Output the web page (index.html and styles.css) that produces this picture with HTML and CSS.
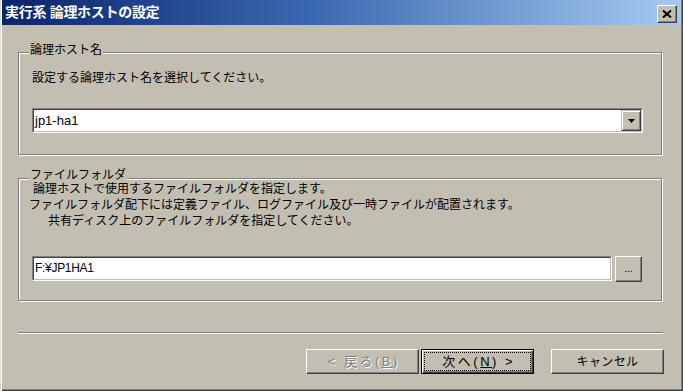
FILE: index.html
```
<!DOCTYPE html>
<html lang="ja">
<head>
<meta charset="utf-8">
<title>実行系 論理ホストの設定</title>
<link rel="stylesheet" href="styles.css">
</head>
<body>
<div class="window">
  <div class="titlebar">
    <span class="title">実行系 論理ホストの設定</span>
    <span class="close-btn">
      <svg width="10" height="8" viewBox="0 0 10 8"><path d="M1 0.5 L9 7.5 M9 0.5 L1 7.5" stroke="#000" stroke-width="2" fill="none"/></svg>
    </span>
  </div>
  <div class="client">
    <div class="group group-host">
      <span class="legend">論理ホスト名</span>
      <div class="desc">設定する論理ホスト名を選択してください。</div>
      <div class="combo">
        <div class="field-inner">
          <span class="value">jp1-ha1</span>
          <span class="drop-btn">
            <svg width="7" height="4" viewBox="0 0 7 4"><path d="M0 0 H7 L3.5 4 Z" fill="#000"/></svg>
          </span>
        </div>
      </div>
    </div>
    <div class="group group-folder">
      <span class="legend">ファイルフォルダ</span>
      <div class="lines">
        <div class="line line-1">論理ホストで使用するファイルフォルダを指定します。</div>
        <div class="line line-2">ファイルフォルダ配下には定義ファイル、ログファイル及び一時ファイルが配置されます。</div>
        <div class="line line-3">共有ディスク上のファイルフォルダを指定してください。</div>
      </div>
      <div class="path-row">
        <div class="edit">
          <div class="field-inner"><span class="value">F:¥JP1HA1</span></div>
        </div>
        <span class="browse-btn">...</span>
      </div>
    </div>
    <div class="separator"></div>
    <div class="buttons">
      <span class="btn btn-disabled"><span class="label wide">&lt; 戻る(<u>B</u>)</span></span>
      <span class="btn btn-default"><span class="focus"><span class="label wide">次へ(<u>N</u>) &gt;</span></span></span>
      <span class="btn btn-cancel"><span class="label">キャンセル</span></span>
    </div>
  </div>
</div>
</body>
</html>
```
FILE: styles.css
```
html, body {
  margin: 0;
  padding: 0;
}
body {
  width: 683px;
  height: 391px;
  overflow: hidden;
  background: #c2beb2;
  font-family: "Liberation Sans", "Noto Sans CJK JP", sans-serif;
  font-size: 12px;
  color: #000;
}
.window {
  box-sizing: border-box;
  width: 683px;
  height: 391px;
  padding: 0 2px 2px 2px;
  background: #c2beb2;
  box-shadow: inset 1px 0 #dcd9d0, inset 2px 0 #fff, inset -1px -1px #404040, inset -2px -2px #808080;
  display: flex;
  flex-direction: column;
}
.titlebar {
  height: 25px;
  flex: none;
  display: flex;
  align-items: flex-start;
  background: linear-gradient(to right, #0a246a 0%, #3a68b0 45%, #a6caf0 100%);
}
.title {
  color: #fff;
  font-weight: bold;
  font-size: 14px;
  line-height: 16px;
  margin: 4px 0 0 3px;
  letter-spacing: -0.3px;
  flex: 1;
  white-space: nowrap;
}
.close-btn {
  box-sizing: border-box;
  width: 20px;
  height: 18px;
  margin: 5px 4px 0 0;
  background: #c2beb2;
  border: 1px solid;
  border-color: #fff #404040 #404040 #fff;
  box-shadow: inset -1px -1px #808080;
  display: flex;
  align-items: center;
  justify-content: center;
}
.close-btn svg {
  display: block;
}
.client {
  flex: 1;
  padding: 27px 19px 0 16px;
  display: flex;
  flex-direction: column;
}
.group {
  position: relative;
  border: 1px solid #808080;
  box-shadow: inset 1px 1px #fff, 1px 1px #fff;
}
.legend {
  position: absolute;
  top: -9px;
  left: 10px;
  padding: 0 1px;
  line-height: 13px;
  height: 13px;
  background: #c2beb2;
  white-space: nowrap;
}
.group-folder .legend {
  top: -10px;
}
.group-host {
  height: 103px;
  box-sizing: border-box;
  padding: 17px 18px 0 13px;
}
.desc {
  line-height: 16px;
  height: 16px;
  white-space: nowrap;
}
.combo, .edit {
  box-sizing: border-box;
  height: 25px;
  border: 1px solid;
  border-color: #808080 #fff #fff #808080;
}
.combo {
  margin-top: 22px;
}
.field-inner {
  box-sizing: border-box;
  height: 100%;
  border: 1px solid;
  border-color: #404040 #c2beb2 #c2beb2 #404040;
  background: #fff;
  display: flex;
  align-items: stretch;
}
.value {
  flex: 1;
  padding-left: 1px;
  font-size: 13px;
  line-height: 21px;
  white-space: nowrap;
}
.edit .value {
  font-size: 12px;
  letter-spacing: -0.3px;
}
.drop-btn {
  box-sizing: border-box;
  width: 20px;
  flex: none;
  background: #c2beb2;
  border: 1px solid;
  border-color: #c2beb2 #404040 #404040 #c2beb2;
  box-shadow: inset 1px 1px #fff, inset -1px -1px #808080;
  display: flex;
  align-items: center;
  justify-content: center;
}
.drop-btn svg {
  display: block;
}
.group-folder {
  margin-top: 23px;
  height: 123px;
  box-sizing: border-box;
  padding: 2px 19px 0 10px;
}
.lines {
  line-height: 16px;
  white-space: nowrap;
}
.line-1 {
  padding-left: 4px;
}
.line-3 {
  padding-left: 19px;
}
.path-row {
  margin-top: 27px;
  margin-left: 3px;
  display: flex;
  gap: 3px;
  height: 25px;
}
.edit {
  flex: 1;
}
.browse-btn {
  box-sizing: border-box;
  width: 27px;
  height: 26px;
  border: 1px solid;
  border-color: #fff #404040 #404040 #fff;
  box-shadow: inset -1px -1px #808080;
  text-align: center;
  font-size: 10px;
  line-height: 24px;
  letter-spacing: 0;
}
.separator {
  margin-top: 31px;
  width: 645px;
  height: 0;
  border-top: 1px solid #808080;
  border-bottom: 1px solid #fff;
}
.buttons {
  margin-top: 15px;
  margin-right: -2px;
  display: flex;
  justify-content: flex-end;
}
.btn {
  box-sizing: border-box;
  width: 113px;
  height: 25px;
  border: 1px solid;
  border-color: #fff #404040 #404040 #fff;
  box-shadow: inset -1px -1px #808080;
  display: flex;
  align-items: center;
  justify-content: center;
  line-height: 16px;
  white-space: nowrap;
}
.label {
  font-size: 12px;
  letter-spacing: 0.4px;
}
.label.wide {
  font-size: 13px;
  letter-spacing: 2.5px;
  margin-right: -2.5px;
}
.btn u {
  text-underline-offset: 1px;
}
.btn-disabled {
  color: #808080;
  text-shadow: 1px 1px 0 #fff;
}
.btn-default {
  margin-left: 2px;
  border: 1px solid #000;
  box-shadow: inset 1px 1px #fff, inset -1px -1px #404040, inset -2px -2px #808080;
}
.focus {
  box-sizing: border-box;
  width: 107px;
  height: 19px;
  border: 1px dotted #000;
  display: flex;
  align-items: center;
  justify-content: center;
}
.btn-cancel {
  margin-left: 17px;
}
```
